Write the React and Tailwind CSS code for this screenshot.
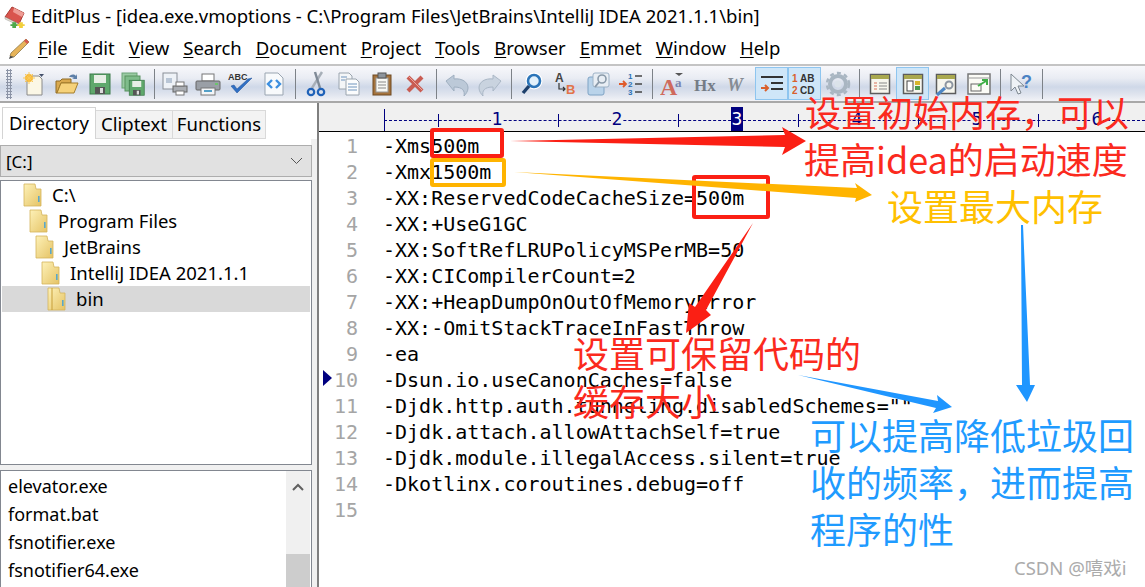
import React from "react";

const ui = { fontFamily: '"Noto Sans", "Noto Sans CJK SC", sans-serif' };
const mono = { fontFamily: '"DejaVu Sans Mono", monospace' };
const cjk = { fontFamily: '"Noto Sans CJK SC", "Noto Sans", sans-serif' };

const menus = ["File", "Edit", "View", "Search", "Document", "Project", "Tools", "Browser", "Emmet", "Window", "Help"];

const lines = [
  "-Xms500m",
  "-Xmx1500m",
  "-XX:ReservedCodeCacheSize=500m",
  "-XX:+UseG1GC",
  "-XX:SoftRefLRUPolicyMSPerMB=50",
  "-XX:CICompilerCount=2",
  "-XX:+HeapDumpOnOutOfMemoryError",
  "-XX:-OmitStackTraceInFastThrow",
  "-ea",
  "-Dsun.io.useCanonCaches=false",
  '-Djdk.http.auth.tunneling.disabledSchemes=""',
  "-Djdk.attach.allowAttachSelf=true",
  "-Djdk.module.illegalAccess.silent=true",
  "-Dkotlinx.coroutines.debug=off",
  "",
];

const S = ({ children }) => (
  <svg width="26" height="26" viewBox="0 0 26 26" fill="none">
    {children}
  </svg>
);

const sans = { fontFamily: '"Liberation Sans", sans-serif' };
const serif = { fontFamily: '"Liberation Serif", serif' };

const Floppy = ({ x = 0, y = 0, s = 1 }) => (
  <g transform={`translate(${x} ${y}) scale(${s})`}>
    <rect x="3" y="3" width="20" height="20" fill="#5fa86c" stroke="#3d7a4a" />
    <rect x="7" y="4" width="12" height="8" fill="#e8efe6" />
    <rect x="8" y="16" width="10" height="7" fill="#555" />
    <rect x="13" y="17" width="3" height="5" fill="#ddd" />
  </g>
);

const Panel = ({ children }) => (
  <S>
    <rect x="3.500" y="3.500" width="19" height="19" fill="#f7f6ee" stroke="#5c5c5c" strokeWidth="1.500" />
    <rect x="4" y="4" width="18" height="4" fill="#a9a84f" />
    {children}
  </S>
);

const Icons = {
  new: (
    <S>
      <path d="M6 5h12l3 3v16H6z" fill="#fbf7e6" stroke="#8a8a8a" />
      <circle cx="8" cy="7" r="4" fill="#f7b733" />
      <path d="M8 1v12M2 7h12M4 3l8 8M12 3l-8 8" stroke="#f9c95a" />
      <path d="M18 3h5l-2.500 3z" fill="#44506a" />
    </S>
  ),
  open: (
    <S>
      <path d="M2 10h4l2-2h9v4H7L3 22H2z" fill="#d9a94e" stroke="#8f6b24" />
      <path d="M7 12h17l-4 10H3z" fill="#f6d27a" stroke="#a57e2c" />
      <path d="M15 6c2-3 5-3 7-1l1-2v5h-5l2-1c-1-1-3-1-5-1z" fill="#5d7fa8" />
    </S>
  ),
  save: (
    <S>
      <Floppy />
    </S>
  ),
  saveall: (
    <S>
      <rect x="2" y="2" width="15" height="15" fill="#9acba3" stroke="#6aa276" />
      <rect x="5" y="5" width="15" height="15" fill="#7fbc8b" stroke="#58915f" />
      <Floppy x="7" y="7" s="0.75" />
    </S>
  ),
  preview: (
    <S>
      <rect x="1" y="2" width="14" height="16" fill="#eef2f7" stroke="#8a8f98" />
      <rect x="4" y="7" width="6" height="5" fill="#b9c6d6" />
      <rect x="11" y="15" width="14" height="6" fill="#a9adb3" stroke="#666" />
      <rect x="14" y="11" width="8" height="4" fill="#fff" stroke="#777" />
      <rect x="14" y="20" width="8" height="4" fill="#fff" stroke="#777" />
    </S>
  ),
  print: (
    <S>
      <rect x="7" y="3" width="12" height="7" fill="#fff" stroke="#777" />
      <rect x="1" y="10" width="24" height="9" rx="1" fill="#9a9fa6" stroke="#666" />
      <rect x="6" y="17" width="14" height="7" fill="#f4f6f8" stroke="#777" />
      <rect x="9" y="19" width="8" height="2" fill="#54a0c8" />
      <rect x="20" y="12" width="3" height="2" fill="#6cc36c" />
    </S>
  ),
  spell: (
    <S>
      <text x="0" y="9" fontSize="9" fontWeight="700" fill="#333" style={sans}>
        ABC
      </text>
      <path d="M3 15l6 7L24 7l-4 1-11 10-3-4z" fill="#2f6fc4" stroke="#1e4f96" strokeWidth="0.500" />
    </S>
  ),
  html: (
    <S>
      <path d="M4 2h13l5 5v17H4z" fill="#f8fafc" stroke="#9aa5b1" />
      <path d="M11 9l-4 4 4 4M15 9l4 4-4 4" stroke="#3d8fe0" strokeWidth="2.400" />
    </S>
  ),
  cut: (
    <S>
      <path d="M19 1L9 17" stroke="#a7afb8" strokeWidth="2.500" />
      <path d="M12 1l5 16" stroke="#7f8a96" strokeWidth="2.500" />
      <circle cx="8" cy="21" r="3.200" stroke="#1f62b8" strokeWidth="2.200" />
      <circle cx="18" cy="21" r="3.200" stroke="#1f62b8" strokeWidth="2.200" />
    </S>
  ),
  copy: (
    <S>
      <path d="M3 2h10l3 3v13H3z" fill="#f4f6f8" stroke="#9aa4ae" />
      <path d="M10 8h10l3 3v13H10z" fill="#fbfcfd" stroke="#9aa4ae" />
      <path d="M12 13h9M12 16h9M12 19h9M5 6h6M5 9h4" stroke="#6e94bd" />
    </S>
  ),
  paste: (
    <S>
      <rect x="4" y="4" width="18" height="20" fill="#a5733c" stroke="#6e4a22" />
      <rect x="7" y="7" width="12" height="14" fill="#f8f8f4" stroke="#999" />
      <rect x="9" y="2" width="8" height="5" fill="#8d949c" stroke="#555" />
      <path d="M9 11h8M9 14h8M9 17h8" stroke="#888" />
    </S>
  ),
  del: (
    <S>
      <path d="M6 6l14 14M20 6L6 20" stroke="#c95c52" strokeWidth="4.200" />
      <path d="M6 5l14 14" stroke="#eba59d" strokeWidth="1" />
    </S>
  ),
  undo: (
    <S>
      <path d="M2 10l8-6v4c8-1 14 3 14 9 0 3-2 6-4 8 1-5-1-9-10-9v4z" fill="#bcc9d8" stroke="#9fafc0" />
    </S>
  ),
  redo: (
    <S>
      <path d="M24 10l-8-6v4C8 7 2 11 2 17c0 3 2 6 4 8-1-5 1-9 10-9v4z" fill="#c9d3df" stroke="#aab7c6" />
    </S>
  ),
  find: (
    <S>
      <circle cx="15" cy="10" r="6.500" stroke="#fff" strokeWidth="4" />
      <circle cx="15" cy="10" r="6" stroke="#2b74b8" strokeWidth="2.600" fill="#e3f1fb" />
      <path d="M10 15l-6 7" stroke="#1d3f6b" strokeWidth="3.400" />
    </S>
  ),
  replace: (
    <S>
      <text x="3" y="11" fontSize="12" fontWeight="700" fill="#444" style={sans}>
        A
      </text>
      <text x="14" y="23" fontSize="13" fontWeight="700" fill="#e2744a" style={sans}>
        B
      </text>
      <path d="M7 12v6h6M11 16l2 2-2 2" stroke="#333" strokeWidth="1.200" />
    </S>
  ),
  multi: (
    <S>
      <rect x="3" y="6" width="16" height="18" rx="2" fill="#b9d3ea" stroke="#7fa3c4" />
      <rect x="8" y="2" width="16" height="14" rx="2" fill="#e8eef4" stroke="#9db2c6" />
      <circle cx="17" cy="8" r="4" stroke="#8a9aa9" strokeWidth="1.600" />
      <path d="M14 11l-4 5" stroke="#8a9aa9" strokeWidth="2" />
    </S>
  ),
  goto: (
    <S>
      <path d="M1 13h7M5 10l3 3-3 3" stroke="#e05a2a" strokeWidth="1.800" />
      <text x="10" y="8" fontSize="8" fontWeight="700" fill="#2a6fb5" style={sans}>1</text>
      <text x="10" y="16" fontSize="8" fontWeight="700" fill="#2a6fb5" style={sans}>2</text>
      <text x="10" y="24" fontSize="8" fontWeight="700" fill="#2a6fb5" style={sans}>3</text>
      <path d="M17 5h7M17 13h7M17 21h7" stroke="#444" strokeWidth="1.600" />
    </S>
  ),
  font: (
    <S>
      <text x="0" y="24" fontSize="24" fontWeight="700" fill="#cf6a5c" style={serif}>A</text>
      <text x="15" y="16" fontSize="13" fontWeight="700" fill="#7a83b0" style={serif}>a</text>
      <path d="M15 2h8l-4 3z" fill="#555" />
    </S>
  ),
  hx: (
    <S>
      <text x="1" y="20" fontSize="17" fontWeight="700" fill="#757c86" style={serif}>Hx</text>
    </S>
  ),
  w: (
    <S>
      <text x="1" y="20" fontSize="18" fontWeight="700" fontStyle="italic" fill="#868c94" style={serif}>W</text>
    </S>
  ),
  wrap: (
    <S>
      <path d="M2 6h22M12 12h12M12 18h12" stroke="#333" strokeWidth="2" />
      <path d="M2 17h7M6 14l3 3-3 3" stroke="#d9602c" strokeWidth="2" />
    </S>
  ),
  ab: (
    <S>
      <text x="0" y="11" fontSize="10" fontWeight="700" fill="#d9602c" style={sans}>1</text>
      <text x="8" y="11" fontSize="10" fontWeight="700" fill="#333" style={sans}>AB</text>
      <text x="0" y="23" fontSize="10" fontWeight="700" fill="#d9602c" style={sans}>2</text>
      <text x="8" y="23" fontSize="10" fontWeight="700" fill="#333" style={sans}>CD</text>
    </S>
  ),
  gear: (
    <S>
      <circle cx="13" cy="13" r="8" stroke="#a9b6c2" strokeWidth="4" />
      <circle cx="13" cy="13" r="11" stroke="#a9b6c2" strokeWidth="2.500" strokeDasharray="4 3.200" />
      <circle cx="13" cy="13" r="3.500" fill="#dbe3ea" />
    </S>
  ),
  panel1: (
    <Panel>
      <path d="M12 12h8M12 15h8M12 18h8" stroke="#888" />
      <path d="M7 12h3M7 15h3M7 18h3" stroke="#d9735a" />
    </Panel>
  ),
  panel2: (
    <Panel>
      <rect x="7" y="10" width="6" height="10" stroke="#444" fill="#fff" />
      <rect x="15" y="10" width="5" height="4" fill="#d6b52c" />
      <rect x="15" y="15" width="5" height="4" fill="#4b9a4f" />
    </Panel>
  ),
  panel3: (
    <Panel>
      <circle cx="16" cy="14" r="3.500" stroke="#8c95a0" strokeWidth="2" />
      <path d="M12 17l-8 7" stroke="#4d86c4" strokeWidth="3" />
    </Panel>
  ),
  panel4: (
    <S>
      <rect x="2" y="3" width="22" height="20" fill="#fbfbf6" stroke="#777" strokeWidth="1.500" />
      <path d="M2 7h22" stroke="#999" />
      <rect x="5" y="13" width="10" height="7" stroke="#666" />
      <path d="M12 15l8-5M16 9h5v5" stroke="#3fae46" strokeWidth="2" />
    </S>
  ),
  help: (
    <S>
      <path d="M3 3v17l4-4 3 7 3-1-3-7h6z" fill="#eef2f6" stroke="#7d8790" />
      <text x="13" y="17" fontSize="18" fontWeight="700" fill="#4b83c4" style={sans}>?</text>
    </S>
  ),
};

const groups = [
  ["new", "open", "save", "saveall"],
  ["preview", "print", "spell", "html"],
  ["cut", "copy", "paste", "del"],
  ["undo", "redo"],
  ["find", "replace", "multi", "goto"],
  ["font", "hx", "w", "wrap", "ab", "gear"],
  ["panel1", "panel2", "panel3", "panel4"],
  ["help"],
];
const active = new Set(["wrap", "ab", "panel2"]);

const Folder = ({ open }) => (
  <svg width="20" height="26" viewBox="0 0 20 26" fill="none">
    <path d="M1 2h11l1 5h5v17H1z" fill="url(#fg)" stroke="#d4b45c" strokeWidth="0.800" />
    {open && <path d="M5 2v22" stroke="#c79f38" />}
    <rect x="15" y="14" width="1.600" height="6" fill="#5aa7c9" />
    <defs>
      <linearGradient id="fg" x1="0" y1="0" x2="1" y2="1">
        <stop offset="0" stopColor="#fdf1b8" />
        <stop offset="1" stopColor="#e5c365" />
      </linearGradient>
    </defs>
  </svg>
);

const tree = [
  ["C:\\", 23, false],
  ["Program Files", 29, false],
  ["JetBrains", 35, false],
  ["IntelliJ IDEA 2021.1.1", 41, false],
  ["bin", 47, true],
];

const Note = ({ className, children }) => (
  <div className={`absolute whitespace-nowrap text-[36px] leading-[47px] ${className}`} style={cjk}>
    {children}
  </div>
);

export default function App() {
  return (
    <div className="relative w-[1145px] h-[587px] overflow-hidden bg-white text-black" style={ui}>
      {/* Title bar */}
      <div className="h-[33px] flex items-center bg-white">
        <svg className="ml-[3px] mr-[5px]" width="23" height="24" viewBox="0 0 23 24" fill="none">
          <path d="M2 12L9 2l12 6-5 11z" fill="#d9554d" stroke="#a93a33" />
          <path d="M11 3l10 5-2 4-9-5z" fill="#ee9d96" />
          <path d="M2 12l14 7 1 2-15-7z" fill="#e9e3d4" stroke="#999" strokeWidth="0.500" />
          <path d="M11 15h6v3h3v3h-3v3h-6v-3H8v-3h3z" fill="#4ea94c" transform="scale(.62) translate(4 13)" />
          <path d="M11 15h6v3h3v3h-3v3h-6v-3H8v-3h3z" fill="#f2cf3b" transform="scale(.62) translate(15 13)" />
        </svg>
        <span className="text-[18.5px] leading-none whitespace-nowrap">
          EditPlus - [idea.exe.vmoptions - C:\Program Files\JetBrains\IntelliJ IDEA 2021.1.1\bin]
        </span>
      </div>

      {/* Menu bar */}
      <div className="h-[31px] flex items-center bg-white">
        <svg className="ml-[7px] mr-[8px]" width="23" height="24" viewBox="0 0 23 24" fill="none">
          <path d="M19 2l3 3L7 20l-4-1 1-3z" fill="#e7b45a" stroke="#8f7a4a" strokeWidth="0.800" />
          <path d="M19 2l3 3-2 2-3-3z" fill="#d8584e" />
          <path d="M3 19l4 1-5 2z" fill="#444" />
        </svg>
        <div className="flex gap-[14px] text-[18.5px] leading-none whitespace-nowrap">
          {menus.map((m) => (
            <span key={m}>
              <span className="underline underline-offset-2 decoration-1">{m[0]}</span>
              {m.slice(1)}
            </span>
          ))}
        </div>
      </div>

      {/* Toolbar */}
      <div className="h-[39px] flex items-center border-t-2 border-b-2 border-t-[#c4c4c4] border-b-[#a8a8a8] bg-[linear-gradient(#f8f8fb_0%,#e9ecf3_35%,#cfd8e8_60%,#dfe4ee_80%,#f2f3f7_100%)]">
        <div className="ml-[6px] mr-[5px] w-[6px] h-[30px] bg-[radial-gradient(#8c94a6_1px,transparent_1.2px)] bg-[length:3px_3px]" />
        {groups.map((g, i) => (
          <React.Fragment key={i}>
            {g.map((k) => (
              <div
                key={k}
                className={`w-[33px] h-[33px] flex items-center justify-center ${
                  active.has(k) ? "bg-[#cfe6f8] border border-[#8ec5ef]" : ""
                }`}
              >
                {Icons[k]}
              </div>
            ))}
            <div className="ml-[5px] mr-[3px] w-px h-[30px] bg-[#7d8288]" />
          </React.Fragment>
        ))}
      </div>

      {/* Body */}
      <div className="flex h-[484px]">
        {/* Left panel */}
        <div className="w-[319px] shrink-0 bg-[#f0f0f0] flex flex-col border-r-2 border-[#7f7f7f]">
          <div className="h-[36px] flex items-end pl-[2px] text-[18.5px] leading-none bg-white">
            <div className="h-[32px] w-[94px] flex items-center justify-center bg-white border border-b-0 border-[#d4d4d4]">
              Directory
            </div>
            <div className="h-[29px] w-[77px] flex items-center justify-center bg-[#f3f3f3] border border-l-0 border-[#d9d9d9]">
              Cliptext
            </div>
            <div className="h-[29px] w-[93px] flex items-center justify-center bg-[#f3f3f3] border border-l-0 border-[#d9d9d9]">
              Functions
            </div>
          </div>
          <div className="h-[6px] bg-white w-[311px]" />
          <div className="h-[32px] w-[312px] flex items-center justify-between pl-[5px] pr-[8px] bg-[#e1e1e1] border border-[#adadad] text-[17px] leading-none">
            <span>[C:]</span>
            <svg width="13" height="8" viewBox="0 0 13 8" fill="none">
              <path d="M1 1l5.500 5.500L12 1" stroke="#555" />
            </svg>
          </div>
          <div className="h-[3px]" />
          <div className="h-[285px] w-[312px] bg-white border border-[#828790] pt-[1px] px-[1px]">
            {tree.map(([t, ind, sel]) => (
              <div key={t} className={`h-[26px] flex items-center text-[18.5px] leading-none whitespace-nowrap ${sel ? "bg-[#d9d9d9]" : ""}`} style={{ paddingLeft: ind - 2 }}>
                <Folder open={sel} />
                <span className="ml-[9px]">{t}</span>
              </div>
            ))}
          </div>
          <div className="h-[5px]" />
          <div className="flex-1 w-[312px] bg-white border border-b-0 border-[#828790] flex overflow-hidden">
            <div className="flex-1 pl-[7px] pt-[1px] text-[18px] leading-[28px]">
              {["elevator.exe", "format.bat", "fsnotifier.exe", "fsnotifier64.exe"].map((f) => (
                <div key={f}>{f}</div>
              ))}
            </div>
            <div className="w-[24px] mr-[1px] bg-[#f0f0f0] flex flex-col items-center">
              <svg className="mt-[12px]" width="12" height="8" viewBox="0 0 12 8" fill="none">
                <path d="M1 7l5-5 5 5" stroke="#606060" strokeWidth="2" />
              </svg>
              <div className="mt-[63px] w-full flex-1 bg-[#cdcdcd]" />
            </div>
          </div>
        </div>

        {/* Editor */}
        <div className="flex-1 flex flex-col min-w-0">
          <div className="relative h-[29px] shrink-0 border-b border-black bg-[#f0f0f0]" style={mono}>
            <div className="absolute left-[65px] top-[17px] right-0 border-t-[1.5px] border-dashed border-[#000080]" />
            <div className="absolute left-[65px] top-[6px] bottom-0 w-px bg-[#000080]" />
            {[119, 239, 359, 479, 599, 719].map((x) => (
              <div key={x} className="absolute top-[11px] w-px h-[13px] bg-[#000080]" style={{ left: x }} />
            ))}
            {[1, 2, 3, 4, 5, 6].map((n, i) => (
              <div
                key={n}
                className={`absolute top-[4px] w-[12px] h-[24px] text-center text-[18px] leading-[24px] ${
                  n === 3 ? "bg-[#000080] text-white" : "bg-[#f0f0f0] text-[#000080]"
                }`}
                style={{ left: 172 + i * 120 }}
              >
                {n}
              </div>
            ))}
          </div>
          <div className="flex-1 flex pt-[1px] text-[20px] leading-[26px]" style={mono}>
            <div className="relative w-[64px] shrink-0 pr-[25px] text-right text-[#a5a5a5]">
              <svg className="absolute left-[4px] top-[237px]" width="9" height="16" viewBox="0 0 9 16">
                <path d="M0 0l9 8-9 8z" fill="#000080" />
              </svg>
              {lines.map((_, i) => (
                <div key={i}>{i + 1}</div>
              ))}
            </div>
            <div className="whitespace-pre">
              {lines.map((l, i) => (
                <div key={i} className="h-[26px]">
                  {l}
                </div>
              ))}
            </div>
          </div>
        </div>
      </div>

      {/* Annotation boxes */}
      <div className="absolute left-[430px] top-[128px] w-[74px] h-[30px] border-[4px] border-[#fb1f14] rounded-[3px]" />
      <div className="absolute left-[430px] top-[158px] w-[76px] h-[29px] border-[4px] border-[#ffb400] rounded-[3px]" />
      <div className="absolute left-[692px] top-[175px] w-[78px] h-[44px] border-[4px] border-[#fb1f14] rounded-[3px]" />

      {/* Annotation arrows */}
      <svg className="absolute inset-0" width="1145" height="587" viewBox="0 0 1145 587" fill="none">
        <path d="M510 141L785 135L782 127L806 141L782 155L785 147Z" fill="#fb1f14" />
        <path d="M514 172L857 188L855 183L872 195L855 202L856 198Z" fill="#ffb400" />
        <path d="M753 223L706 310L711 315L686 333L689 303L695 307Z" fill="#fb1f14" />
        <path d="M798 375L938 401L937 395L952 407L933 413L936 408Z" fill="#1f96ff" />
        <path d="M1021 225L1023 225L1030 385L1035 385L1027 402L1016 385L1022 385Z" fill="#1f96ff" />
      </svg>

      {/* Annotation notes */}
      <Note className="left-[805px] top-[88px] text-[#fb2a1e]">设置初始内存，可以</Note>
      <Note className="left-[804px] top-[135px] text-[#fb2a1e]">提高idea的启动速度</Note>
      <Note className="left-[887px] top-[182px] text-[#ffc000]">设置最大内存</Note>
      <Note className="left-[573px] top-[329px] text-[#fb2a1e]">设置可保留代码的</Note>
      <Note className="left-[573px] top-[377px] text-[#fb2a1e]">缓存大小</Note>
      <Note className="left-[810px] top-[411px] text-[#1f9bff]">可以提高降低垃圾回</Note>
      <Note className="left-[810px] top-[458px] text-[#1f9bff]">收的频率，进而提高</Note>
      <Note className="left-[810px] top-[505px] text-[#1f9bff]">程序的性</Note>

      <div className="absolute left-[1014px] top-[557px] text-[18.5px] leading-[22px] text-[#ababab] whitespace-nowrap" style={ui}>
        CSDN @嘻戏i
      </div>
    </div>
  );
}
